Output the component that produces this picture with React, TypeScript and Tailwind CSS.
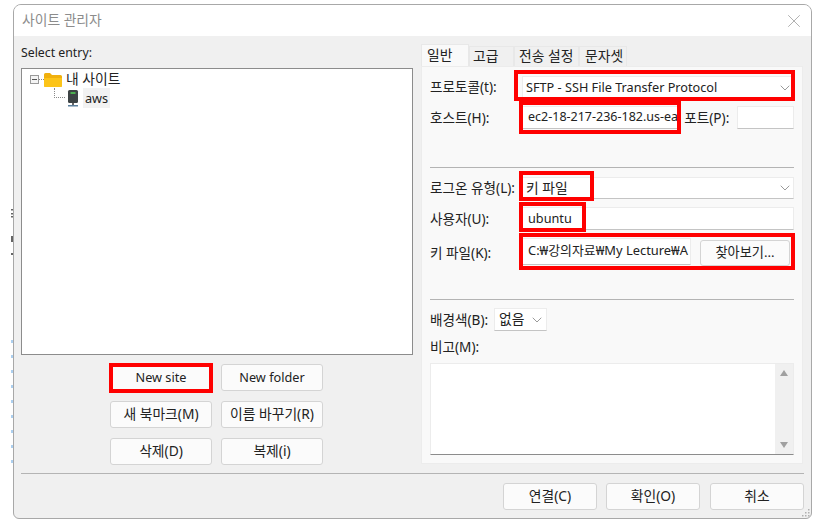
import type { ReactNode } from "react";
import { ChevronDown, X } from "lucide-react";

const FONT = "font-['Noto_Sans','Noto_Sans_CJK_KR',sans-serif]";

// korean and latin strings need different sizes to land on the same widths
const KO = "text-[13.8px]";
const EN = "text-[12.7px]";

function Btn({ children, className = "", size = KO }: { children: ReactNode; className?: string; size?: string }) {
  return (
    <div
      className={`flex items-center justify-center rounded-[3px] border border-[#d4d4d4] bg-[#fbfbfb] text-[#222] ${size} ${className}`}
    >
      {children}
    </div>
  );
}

/** red annotation drawn over the form controls. */
function RedBox({ className }: { className: string }) {
  return <div className={`pointer-events-none absolute border-[4px] border-[#ff0000] ${className}`} />;
}

function FieldLabel({ children, className = "w-[92px]" }: { children: ReactNode; className?: string }) {
  return <span className={`shrink-0 text-[13.6px] leading-none text-[#222] ${className}`}>{children}</span>;
}

function Input({ children, className = "", size = EN }: { children?: ReactNode; className?: string; size?: string }) {
  return (
    <div
      className={`flex items-center overflow-hidden whitespace-nowrap border border-[#ececec] border-b-[#c4c4c4] bg-white pl-[5px] text-[#222] ${size} ${className}`}
    >
      {children}
    </div>
  );
}

function Tab({ label, active, className }: { label: string; active?: boolean; className: string }) {
  return (
    <div
      className={`flex items-center border border-b-0 border-[#e8e8e8] text-[#222] ${KO} ${active ? "h-[22px] bg-[#f9f9f9]" : "h-[20px] bg-[#f0f0f0]"} ${className}`}
    >
      {label}
    </div>
  );
}

function SiteTree() {
  return (
    <div className="h-[287px] border border-[#8c8c8c] bg-white pl-[8px] pt-[2px]">
      <div className="flex h-[17px] items-center">
        <div className="flex h-[9px] w-[9px] items-center justify-center border border-[#9a9a9a] bg-[#f4f4f4]">
          <div className="h-px w-[5px] bg-[#555]" />
        </div>
        <div className="w-[5px] border-t border-dotted border-[#888]" />
        <svg width="18" height="15" viewBox="0 0 18 15" className="shrink-0">
          <path d="M0 2.5 Q0 1 1.5 1 H6 L8 3 H16.5 Q18 3 18 4.5 V13.5 Q18 15 16.5 15 H1.5 Q0 15 0 13.5 Z" fill="#f0b00e" />
          <path d="M0 6 H18 V13.5 Q18 15 16.5 15 H1.5 Q0 15 0 13.5 Z" fill="#fcc419" />
        </svg>
        <span className={`ml-[4px] text-[#222] ${KO}`}>내 사이트</span>
      </div>
      <div className="flex h-[20px] items-center">
        <div className="ml-[24px] mt-[-10px] h-[10px] w-[11px] border-b border-l border-dotted border-[#888]" />
        <svg width="12" height="17" viewBox="0 0 12 17" className="ml-[2px] shrink-0">
          <rect x="1" y="0" width="10" height="13" rx="1.5" fill="#3d4345" />
          <rect x="3.5" y="2" width="5" height="2" fill="#4caf50" />
          <rect x="5" y="13" width="2" height="2" fill="#666" />
          <rect x="1" y="15" width="10" height="1.5" fill="#5b7f9c" />
        </svg>
        <span className={`ml-[4px] bg-[#f2f2f2] px-[2px] leading-[20px] text-[#222] ${EN}`}>aws</span>
      </div>
    </div>
  );
}

export default function App() {
  return (
    <div className={`relative h-[527px] w-[817px] overflow-hidden bg-white pl-[13px] pt-[4px] ${FONT}`}>
      {/* bits of the window behind, peeking past the left edge */}
      <svg width="2" height="527" viewBox="0 0 2 527" className="absolute left-[11px] top-0">
        <path d="M0 209h2v1.5H0zM0 213h2v1.5H0zM0 216h2v1.5H0zM0 236h2v6H0zM0 253h2v2H0z" fill="#666" />
        <path d="M1 340V472" stroke="#5aa0e0" strokeWidth="1" strokeDasharray="3 12" />
      </svg>
      <div className="relative flex h-[515px] w-[799px] flex-col overflow-hidden rounded-t-[8px] rounded-b-[6px] border border-[#a8a8a8] bg-[#f0f0f0]">
        <div className="flex h-[31px] shrink-0 items-center justify-between bg-white pl-[8px] pr-[6px]">
          <span className={`text-[#8c8c8c] ${KO}`}>사이트 관리자</span>
          <X size={22} strokeWidth={0.9} className="text-[#a0a0a0]" />
        </div>

        <div className="flex flex-1 pl-[7px]">
          <div className="w-[392px] shrink-0">
            <div className="flex h-[32px] items-center pt-[2px] text-[12.3px] text-[#222]">Select entry:</div>
            <SiteTree />
            <div className="relative ml-[89px] mt-[9px] grid w-[213px] grid-cols-[102px_102px] gap-x-[9px] gap-y-[10px]">
              <RedBox className="left-[-1px] top-[-1px] h-[30px] w-[104px]" />
              <Btn className="h-[27px]" size={EN}>New site</Btn>
              <Btn className="h-[27px]" size={EN}>New folder</Btn>
              <Btn className="h-[27px]">새 북마크(M)</Btn>
              <Btn className="h-[27px]">이름 바꾸기(R)</Btn>
              <Btn className="h-[27px]">삭제(D)</Btn>
              <Btn className="h-[27px]">복제(i)</Btn>
            </div>
          </div>

          <div className="ml-[8px] w-[382px] shrink-0 pt-[8px]">
            <div className="flex h-[22px] items-end">
              <Tab label="일반" active className="w-[48px] pl-[5px]" />
              <Tab label="고급" className="w-[45px] pl-[3px]" />
              <Tab label="전송 설정" className="w-[65px] pl-[4px]" />
              <Tab label="문자셋" className="w-[48px] pl-[5px]" />
            </div>
            <div className="relative h-[398px] border border-[#ececec] bg-[#f9f9f9] px-[8px] pt-[9px]">
              <RedBox className="left-[92px] top-[3px] h-[31px] w-[281px]" />
              <RedBox className="left-[97px] top-[34px] h-[33px] w-[162px]" />
              <RedBox className="left-[97px] top-[104px] h-[30px] w-[75px]" />
              <RedBox className="left-[97px] top-[135px] h-[30px] w-[67px]" />
              <RedBox className="left-[97px] top-[166px] h-[37px] w-[276px]" />

              <div className="flex h-[23px] items-center">
                <FieldLabel className="w-[92px] pb-[2px]">프로토콜(t):</FieldLabel>
                <Input className="h-[23px] w-[272px] justify-between !pl-[3px]">
                  SFTP - SSH File Transfer Protocol
                  <ChevronDown size={16} strokeWidth={1} className="text-[#666]" />
                </Input>
              </div>
              <div className="mt-[7px] flex h-[23px] items-center">
                <FieldLabel>호스트(H):</FieldLabel>
                <Input className="h-[23px] w-[157px]" size="text-[12.5px]">ec2-18-217-236-182.us-ea</Input>
                <FieldLabel className="ml-[6px] w-[52px]">포트(P):</FieldLabel>
                <Input className="ml-[1px] h-[23px] w-[57px]" />
              </div>

              <div className="mt-[38px] border-t border-[#b4b4b4]" />

              <div className="mt-[9px] flex h-[22px] items-center">
                <FieldLabel>로그온 유형(L):</FieldLabel>
                <Input className="h-[22px] w-[272px] justify-between !pl-[3px]" size={KO}>
                  키 파일
                  <ChevronDown size={16} strokeWidth={1} className="text-[#666]" />
                </Input>
              </div>
              <div className="mt-[8px] flex h-[23px] items-center">
                <FieldLabel>사용자(U):</FieldLabel>
                <Input className="h-[23px] w-[272px]">ubuntu</Input>
              </div>
              <div className="mt-[8px] flex h-[27px] items-center">
                <FieldLabel className="w-[92px] pt-[2px]">키 파일(K):</FieldLabel>
                <Input className="h-[27px] w-[169px] !items-start pt-[2px]" size="text-[12.9px]">C:₩강의자료₩My Lecture₩A</Input>
                <Btn className="ml-[9px] mt-[2px] h-[26px] w-[90px]" size="text-[13.2px]">찾아보기...</Btn>
              </div>

              <div className="mt-[34px] border-t border-[#b4b4b4]" />

              <div className="mt-[8px] flex h-[23px] items-center">
                <FieldLabel className="w-[64px]">배경색(B):</FieldLabel>
                <Input className="h-[23px] w-[53px] justify-between !pl-[4px] pr-[1px]" size={KO}>
                  없음
                  <ChevronDown size={16} strokeWidth={1} className="text-[#666]" />
                </Input>
              </div>
              <div className="mt-[9px] flex h-[14px] items-center">
                <FieldLabel>비고(M):</FieldLabel>
              </div>
              <div className="mt-[9px] flex h-[92px] w-[364px] justify-end border border-[#ececec] border-b-[#8c8c8c] bg-white">
                <div className="flex w-[18px] flex-col items-center justify-between bg-[#f0f0f0] py-[6px]">
                  <div className="h-0 w-0 border-x-[4px] border-b-[6px] border-x-transparent border-b-[#a0a0a0]" />
                  <div className="h-0 w-0 border-x-[4px] border-t-[6px] border-x-transparent border-t-[#a0a0a0]" />
                </div>
              </div>
            </div>
          </div>
        </div>

        <div className="ml-[7px] mr-[7px] border-t border-[#b4b4b4]" />
        <div className="flex h-[44px] shrink-0 justify-end gap-x-[9px] pr-[7px] pt-[9px]">
          <Btn className="h-[27px] w-[94px]">연결(C)</Btn>
          <Btn className="h-[27px] w-[94px]">확인(O)</Btn>
          <Btn className="ml-[1px] h-[27px] w-[94px]">취소</Btn>
        </div>
        <svg width="9" height="9" viewBox="0 0 9 9" className="absolute bottom-[1px] right-[1px]">
          <path d="M7 1h1.5v1.5H7zM4 4h1.5v1.5H4zM7 4h1.5v1.5H7zM1 7h1.5v1.5H1zM4 7h1.5v1.5H4zM7 7h1.5v1.5H7z" fill="#b0b0b0" />
        </svg>
      </div>
    </div>
  );
}
